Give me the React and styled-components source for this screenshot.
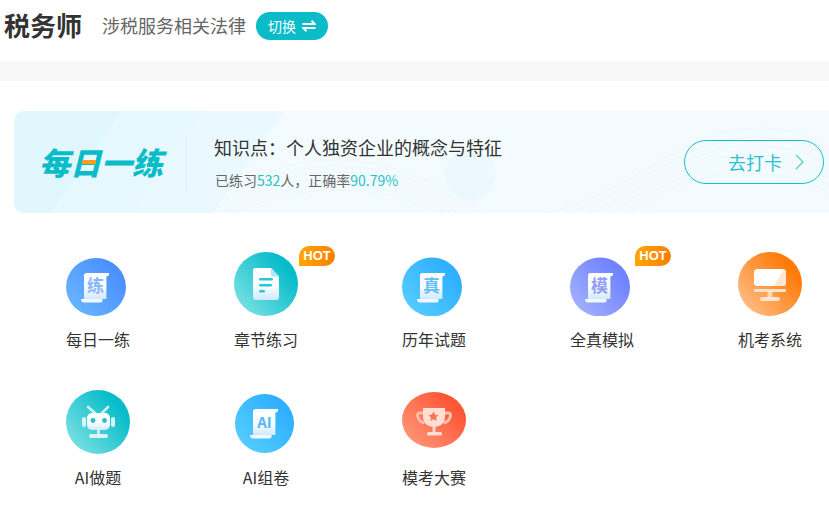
import styled, { createGlobalStyle } from "styled-components";

const GlobalStyle = createGlobalStyle`
  html, body {
    margin: 0;
    padding: 0;
    background: #fff;
    overflow: hidden;
  }
  body {
    font-family: "Noto Sans CJK SC", "Noto Sans", sans-serif;
    color: #333;
  }
`;

const tones = {
  blue: ["#6cbcff", "#4c90ff"],
  teal: ["#8ce6e8", "#06bcc9"],
  sky: ["#5cd2ff", "#2fb0ff"],
  violet: ["#aab8ff", "#7082ff"],
  orange: ["#ffc79a", "#ff7a08"],
  red: ["#ff9f80", "#ff5636"],
};

const Disc = ({ id, tone, cx, cy, rx, ry }) => (
  <>
    <defs>
      <linearGradient id={id} x1="0" y1="1" x2="1" y2="0.15">
        <stop offset="0" stopColor={tones[tone][0]} />
        <stop offset="0.85" stopColor={tones[tone][1]} />
      </linearGradient>
      <linearGradient id={`${id}-paper`} x1="0" y1="0" x2="0" y2="1">
        <stop offset="0" stopColor="#ffffff" />
        <stop offset="0.6" stopColor="#f6fbff" />
        <stop offset="1" stopColor="#cfe9ff" />
      </linearGradient>
    </defs>
    <ellipse cx={cx} cy={cy} rx={rx} ry={ry} fill={`url(#${id})`} />
  </>
);

const ScrollIcon = ({ id, tone, glyph, ink, box, dx = 0, dy = 0, size = 17 }) => (
  <svg width="64" height="64" viewBox="0 0 64 64">
    <Disc id={id} tone={tone} {...box} />
    <g transform={`translate(${dx} ${dy})`}>
      <path
        d="M18 23.500a2.500 2.500 0 0 1 2.500-2.500H43a2.600 2.600 0 0 1-2.600 3.400V47H18Z"
        fill={`url(#${id}-paper)`}
      />
      <path d="M15 47h20.500c1 0 1.500 1 1 2s-1.200 1.500-2.500 1.500H18c-1.800 0-3-1.500-3-3.500Z" fill="#f1f8ff" />
      <text
        x="29.500"
        y="40"
        textAnchor="middle"
        fontFamily="'Noto Sans CJK SC', sans-serif"
        fontWeight="700"
        fontSize={size}
        fill={ink}
      >
        {glyph}
      </text>
    </g>
  </svg>
);

const DocIcon = () => (
  <svg width="64" height="64" viewBox="0 0 64 64">
    <Disc id="doc" tone="teal" cx={32} cy={32} rx={32} ry={32} />
    <path
      d="M21.500 16H37l8 8.500V45a3 3 0 0 1-3 3H22a3 3 0 0 1-3-3V18.500a2.500 2.500 0 0 1 2.500-2.500Z"
      fill="url(#doc-paper)"
    />
    <path d="M37 16l8 8.500h-6a2 2 0 0 1-2-2Z" fill="#a9ebee" />
    <rect x="25" y="26" width="14" height="2.600" rx="1.300" fill="#2cc6d0" />
    <rect x="25" y="32" width="13" height="2.600" rx="1.300" fill="#2cc6d0" />
    <rect x="25" y="38" width="6" height="2.600" rx="1.300" fill="#2cc6d0" />
  </svg>
);

const MonitorIcon = () => (
  <svg width="64" height="64" viewBox="0 0 64 64">
    <Disc id="monitor" tone="orange" cx={32} cy={32} rx={32} ry={32} />
    <rect x="16" y="17" width="32" height="17" rx="3.500" fill="#fff" />
    <path d="M48 20.500V30.500a3.500 3.500 0 0 1-3.500 3.500H36L46 17.500c1.200.400 2 1.600 2 3Z" fill="#ffe6d2" />
    <rect x="16" y="37" width="32" height="3" rx="1" fill="#ffe3cd" />
    <rect x="29.500" y="40" width="5" height="6" fill="#ffd9bd" />
    <rect x="22" y="45" width="20" height="4" rx="2" fill="#ffe3cd" />
  </svg>
);

const RobotIcon = () => (
  <svg width="64" height="64" viewBox="0 0 64 64">
    <Disc id="robot" tone="teal" cx={32} cy={32} rx={32} ry={32} />
    <path d="M29 23l-7-6M36 23l6-6" stroke="#c9f3f4" strokeWidth="2.600" strokeLinecap="round" />
    <rect x="16" y="27" width="4" height="10" rx="2" fill="#d8f6f7" />
    <rect x="45" y="27" width="4" height="10" rx="2" fill="#d8f6f7" />
    <rect x="21" y="23" width="23" height="17" rx="5" fill="url(#robot-paper)" />
    <circle cx="27" cy="30.500" r="2.400" fill="#2cbfca" />
    <circle cx="38.500" cy="30.500" r="2.400" fill="#2cbfca" />
    <rect x="31" y="40" width="3" height="5" fill="#c9f3f4" />
    <rect x="23" y="44" width="19" height="4" rx="2" fill="#d8f6f7" />
  </svg>
);

const TrophyIcon = () => (
  <svg width="64" height="64" viewBox="0 0 64 64">
    <Disc id="trophy" tone="red" cx={32} cy={30} rx={32} ry={28} />
    <path
      d="M21 23h-3.500c-2 0-2.500 2-1.500 4.500 1.200 3 3.400 5 6.500 5.500M43 23h3.500c2 0 2.500 2 1.500 4.500-1.200 3-3.400 5-6.500 5.500"
      fill="none"
      stroke="#ffbfab"
      strokeWidth="3"
    />
    <path d="M21 18h22v9c0 6-5 10-11 10s-11-4-11-10Z" fill="#ffdfd4" />
    <path
      d="M31.500 21.500l1.600 3.200 3.500.4-2.600 2.400.7 3.500-3.200-1.800-3.200 1.800.7-3.500-2.600-2.400 3.500-.4Z"
      fill="#ff7355"
    />
    <rect x="30.500" y="37" width="3" height="5" fill="#ffd5c7" />
    <rect x="25" y="42" width="15" height="3.500" rx="1.500" fill="#ffdfd4" />
  </svg>
);

const entries = [
  {
    label: "每日一练",
    icon: (
      <ScrollIcon id="lian" tone="blue" glyph="练" ink="#86b4ff" box={{ cx: 30, cy: 35, rx: 30, ry: 29 }} />
    ),
  },
  { label: "章节练习", hot: true, icon: <DocIcon /> },
  {
    label: "历年试题",
    icon: (
      <ScrollIcon id="zhen" tone="sky" glyph="真" ink="#62bdf7" box={{ cx: 30, cy: 35, rx: 30, ry: 29.500 }} />
    ),
  },
  {
    label: "全真模拟",
    hot: true,
    icon: (
      <ScrollIcon id="mo" tone="violet" glyph="模" ink="#949ff4" box={{ cx: 30, cy: 35, rx: 30, ry: 29.500 }} />
    ),
  },
  { label: "机考系统", icon: <MonitorIcon /> },
  { label: "AI做题", icon: <RobotIcon /> },
  {
    label: "AI组卷",
    icon: (
      <ScrollIcon
        id="ai"
        tone="sky"
        glyph="AI"
        ink="#55b7f5"
        dy={-2}
        dx={1}
        size={15}
        box={{ cx: 30.500, cy: 33.500, rx: 29.500, ry: 29.500 }}
      />
    ),
  },
  { label: "模考大赛", icon: <TrophyIcon /> },
];

const waveRows = [0, 1, 2, 3, 4, 5];

export default function App() {
  return (
    <Page>
      <GlobalStyle />
      <Header>
        <Title>税务师</Title>
        <Subtitle>涉税服务相关法律</Subtitle>
        <SwitchButton>
          切换
          <svg width="14" height="12" viewBox="0 0 14 12">
            <path
              d="M0.500 4H13L9.500 0.800M13.500 8H1L4.500 11.200"
              fill="none"
              stroke="#fff"
              strokeWidth="1.900"
            />
          </svg>
        </SwitchButton>
      </Header>
      <Band />
      <Banner>
        <Waves viewBox="0 0 829 102">
          {waveRows.map((n) => (
            <path
              key={`arc-${n}`}
              d={`M${180 + n * 8} 102 Q320 ${-4 + n * 12} ${470 - n * 8} 102`}
              fill="none"
              stroke="#eaf7fd"
            />
          ))}
          {waveRows.map((n) => (
            <path
              key={`rise-${n}`}
              d={`M${530 + n * 22} 102 C610 ${88 + n * 3} 670 ${17 + n * 8} 740 ${17 + n * 9} S800 ${40 + n * 8} 829 ${44 + n * 9}`}
              fill="none"
              stroke="#eaf7fd"
            />
          ))}
          <circle cx="456" cy="64" r="25.500" fill="#ebf8fe" />
        </Waves>
        <Brand>
          每日一练
          <BrandMark />
        </Brand>
        <Divider />
        <Info>
          <InfoTitle>{"知识点\uFF1A个人独资企业的概念与特征"}</InfoTitle>
          <InfoStats>
            已练习<em>532</em>
            {"人\uFF0C正确率"}
            <em>90.79%</em>
          </InfoStats>
        </Info>
        <PunchButton>
          去打卡
          <svg width="9" height="16" viewBox="0 0 9 16">
            <path d="M1 1l7 7-7 7" fill="none" stroke="#55ccd4" strokeWidth="1.300" />
          </svg>
        </PunchButton>
      </Banner>
      <EntryGrid>
        {entries.map((entry) => (
          <Entry key={entry.label}>
            <IconSlot>
              {entry.icon}
              {entry.hot ? <HotTag>HOT</HotTag> : null}
            </IconSlot>
            <EntryLabel>{entry.label}</EntryLabel>
          </Entry>
        ))}
      </EntryGrid>
    </Page>
  );
}

const Page = styled.div`
  width: 829px;
  height: 511px;
  overflow: hidden;
`;

const Header = styled.header`
  display: flex;
  align-items: center;
  height: 51px;
  padding: 0 0 10px 4px;
`;

const Title = styled.h1`
  margin: 0 0 2px;
  font-size: 26px;
  line-height: 34px;
  font-weight: 700;
  color: #333;
`;

const Subtitle = styled.span`
  margin: 0 0 2px 20px;
  font-size: 18px;
  line-height: 26px;
  color: #666;
`;

const SwitchButton = styled.button`
  display: flex;
  align-items: center;
  gap: 6px;
  width: 72px;
  height: 28px;
  margin: 1px 0 0 10px;
  padding: 0 0 0 12px;
  border: 0;
  border-radius: 14px;
  background: #09bcc8;
  color: #fff;
  font-family: inherit;
  font-size: 14px;
  line-height: 28px;
`;

const Band = styled.div`
  height: 20px;
  background: #f8f8f8;
`;

const Banner = styled.section`
  position: relative;
  display: flex;
  align-items: center;
  width: 830px;
  height: 102px;
  margin: 30px 0 39px 14px;
  padding-left: 25px;
  box-sizing: border-box;
  overflow: hidden;
  border-radius: 10px 0 0 10px;
  background:
    linear-gradient(125deg, #e1f7fe 0 12%, #e7f9ff 12% 21%, #eaf9ff 21% 30%, rgba(255, 255, 255, 0) 30%),
    #f3fbff;
`;

const Waves = styled.svg`
  position: absolute;
  inset: 0;
  width: 829px;
  height: 102px;
`;

const Brand = styled.div`
  position: relative;
  width: 124px;
  font-size: 31px;
  line-height: 42px;
  font-weight: 900;
  font-style: italic;
  white-space: nowrap;
  color: #09bcc8;
`;

const BrandMark = styled.i`
  position: absolute;
  left: 43px;
  top: 19px;
  width: 14px;
  height: 4px;
  background: #ff9c1a;
`;

const Divider = styled.div`
  position: relative;
  width: 1px;
  height: 52px;
  margin-left: 23px;
  background: #d9f1f7;
`;

const Info = styled.div`
  position: relative;
  display: flex;
  flex-direction: column;
  gap: 11px;
  margin-left: 27px;
`;

const InfoTitle = styled.div`
  font-size: 18px;
  line-height: 24px;
  color: #333;
  white-space: nowrap;
`;

const InfoStats = styled.div`
  padding-left: 1px;
  font-size: 14px;
  line-height: 20px;
  color: #666;

  em {
    font-style: normal;
    color: #2cc0cc;
  }
`;

const PunchButton = styled.button`
  position: absolute;
  left: 670px;
  top: 29px;
  display: flex;
  align-items: center;
  gap: 13px;
  width: 140px;
  height: 44px;
  padding: 0 0 0 43px;
  box-sizing: border-box;
  border: 1px solid #14c0cb;
  border-radius: 22px;
  background: transparent;
  color: #2cc0cc;
  font-family: inherit;
  font-size: 18px;
`;

const EntryGrid = styled.div`
  display: grid;
  grid-template-columns: repeat(5, 168px);
  grid-auto-rows: 138px;
  padding-left: 14px;
`;

const Entry = styled.div`
  display: flex;
  flex-direction: column;
  align-items: center;
`;

const IconSlot = styled.div`
  position: relative;
  width: 64px;
  height: 64px;

  svg {
    display: block;
  }
`;

const HotTag = styled.span`
  position: absolute;
  left: 65px;
  top: -6px;
  width: 36px;
  height: 20px;
  border-radius: 10px 10px 10px 0;
  background: linear-gradient(90deg, #ffa800, #ff7c00);
  color: #fff;
  font-family: "Liberation Sans", sans-serif;
  font-size: 13px;
  font-weight: 700;
  line-height: 20px;
  text-align: center;
`;

const EntryLabel = styled.div`
  margin-top: 11px;
  font-size: 16px;
  line-height: 24px;
  color: #333;
  white-space: nowrap;
`;
